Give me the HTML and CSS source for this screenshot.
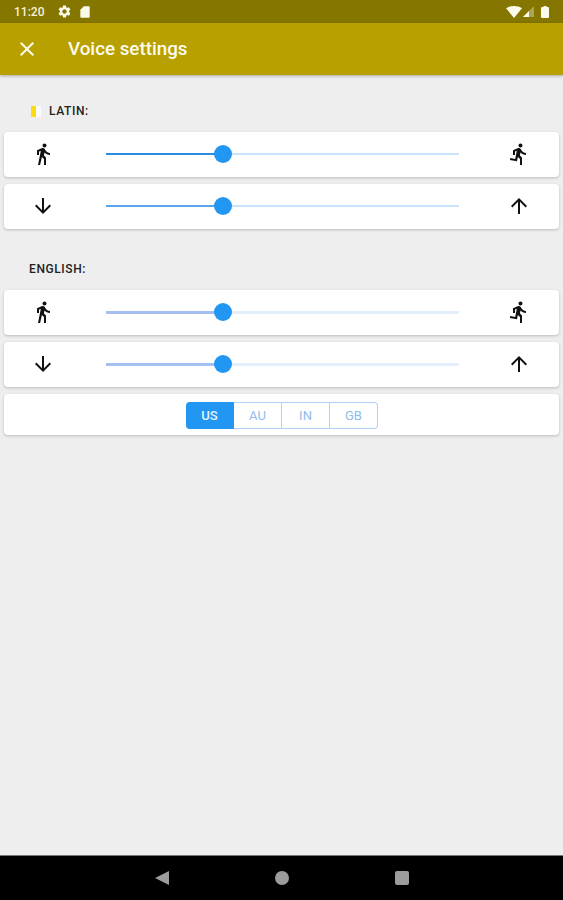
FILE: index.html
```html
<!DOCTYPE html>
<html lang="en">
<head>
  <meta charset="UTF-8" />
  <title>Voice settings</title>
  <link rel="stylesheet" href="styles.css">
</head>
<body>
  <svg class="defs" width="0" height="0">
    <symbol id="walk" viewBox="0 0 24 24"><path d="M13.5 5.5c1.1 0 2-.9 2-2s-.9-2-2-2-2 .9-2 2 .9 2 2 2zM9.8 8.9L7 23h2.1l1.8-8 2.1 2v6h2v-7.5l-2.1-2 .6-3C14.8 12 16.8 13 19 13v-2c-1.9 0-3.5-1-4.3-2.4l-1-1.6c-.4-.6-1-1-1.7-1-.3 0-.5.1-.8.1L6 8.3V13h2V9.6l1.8-.7"/></symbol>
    <symbol id="run" viewBox="0 0 24 24"><path d="M13.49 5.48c1.1 0 2-.9 2-2s-.9-2-2-2-2 .9-2 2 .9 2 2 2zm-3.6 13.9l1-4.4 2.1 2v6h2v-7.5l-2.1-2 .6-3c1.3 1.5 3.3 2.5 5.5 2.5v-2c-1.9 0-3.5-1-4.3-2.5l-1-1.6c-.4-.6-1-1-1.7-1-.3 0-.5.1-.8.1l-5.2 2.2v4.7h2v-3.4l1.8-.7-1.6 8.1-4.9-1-.4 2 7 1.4z"/></symbol>
    <symbol id="down" viewBox="0 0 24 24"><path d="M20 12l-1.41-1.41L13 16.17V4h-2v12.17l-5.58-5.59L4 12l8 8 8-8z"/></symbol>
    <symbol id="up" viewBox="0 0 24 24"><path d="M4 12l1.41 1.41L11 7.83V20h2V7.83l5.58 5.59L20 12l-8-8-8 8z"/></symbol>
  </svg>

  <div class="status-bar">
    <span class="clock">11:20</span>
    <svg class="st-gear" viewBox="0 0 24 24"><path d="M19.14 12.94c.04-.3.06-.61.06-.94 0-.32-.02-.64-.07-.94l2.03-1.58c.18-.14.23-.41.12-.61l-1.92-3.32c-.12-.22-.37-.29-.59-.22l-2.39.96c-.5-.38-1.03-.7-1.62-.94l-.36-2.54c-.04-.24-.24-.41-.48-.41h-3.84c-.24 0-.43.17-.47.41l-.36 2.54c-.59.24-1.13.57-1.62.94l-2.39-.96c-.22-.08-.47 0-.59.22L2.74 8.87c-.12.21-.08.47.12.61l2.03 1.58c-.05.3-.09.63-.09.94s.02.64.07.94l-2.03 1.58c-.18.14-.23.41-.12.61l1.92 3.32c.12.22.37.29.59.22l2.39-.96c.5.38 1.03.7 1.62.94l.36 2.54c.05.24.24.41.48.41h3.84c.24 0 .44-.17.47-.41l.36-2.54c.59-.24 1.13-.56 1.62-.94l2.39.96c.22.08.47 0 .59-.22l1.92-3.32c.12-.22.07-.47-.12-.61l-2.01-1.58zM12 15.6c-1.98 0-3.6-1.62-3.6-3.6s1.62-3.6 3.6-3.6 3.6 1.62 3.6 3.6-1.62 3.6-3.6 3.6z"/></svg>
    <svg class="st-sd" viewBox="0 0 24 24"><path d="M18 2h-8L4.02 8 4 20c0 1.1.9 2 2 2h12c1.1 0 2-.9 2-2V4c0-1.1-.9-2-2-2z"/></svg>
    <span class="spacer"></span>
    <svg class="st-wifi" viewBox="0 0 16 12"><path d="M0 2.2C2.2.8 5 0 8 0s5.800.8 8 2.200L8 12z"/></svg>
    <svg class="st-signal" viewBox="0 0 11 11"><path class="dim" d="M11 0v11H0z"/><path d="M6 5v6H0z"/></svg>
    <svg class="st-battery" viewBox="0 0 8 12"><path d="M2.500 0h3v1H7a1 1 0 0 1 1 1v9a1 1 0 0 1-1 1H1a1 1 0 0 1-1-1V2a1 1 0 0 1 1-1h1.500z"/></svg>
  </div>

  <header class="app-bar">
    <svg class="close" viewBox="0 0 24 24"><path d="M19 6.410L17.590 5 12 10.590 6.410 5 5 6.410 10.590 12 5 17.590 6.410 19 12 13.410 17.590 19 19 17.590 13.410 12z"/></svg>
    <h1>Voice settings</h1>
  </header>

  <main class="content">
    <div class="section-label flagged"><span class="flag"></span>LATIN:</div>
    <div class="card row">
      <svg class="icon"><use href="#walk"/></svg>
      <div class="slider"><div class="fill strong" style="width:33.100%"></div><span class="thumb"></span></div>
      <svg class="icon"><use href="#run"/></svg>
    </div>
    <div class="card row">
      <svg class="icon"><use href="#down"/></svg>
      <div class="slider"><div class="fill medium" style="width:33.100%"></div><span class="thumb"></span></div>
      <svg class="icon"><use href="#up"/></svg>
    </div>

    <div class="section-label second">ENGLISH:</div>
    <div class="card row">
      <svg class="icon"><use href="#walk"/></svg>
      <div class="slider pale"><div class="fill soft" style="width:33.100%"></div><span class="thumb"></span></div>
      <svg class="icon"><use href="#run"/></svg>
    </div>
    <div class="card row">
      <svg class="icon"><use href="#down"/></svg>
      <div class="slider pale"><div class="fill soft" style="width:33.100%"></div><span class="thumb"></span></div>
      <svg class="icon"><use href="#up"/></svg>
    </div>
    <div class="card accents">
      <div class="segments">
        <button class="active">US</button><button>AU</button><button>IN</button><button>GB</button>
      </div>
    </div>
  </main>

  <nav class="nav-bar">
    <span class="nav-cell"><svg width="16" height="16" viewBox="0 0 16 16"><path d="M15 1v14L1 8z"/></svg></span>
    <span class="nav-cell"><svg width="16" height="16" viewBox="0 0 16 16"><circle cx="8" cy="8" r="7"/></svg></span>
    <span class="nav-cell"><svg width="16" height="16" viewBox="0 0 16 16"><rect x="1" y="1" width="14" height="14" rx="2"/></svg></span>
  </nav>
</body>
</html>
```

FILE: styles.css
```css
* { box-sizing: border-box; }
html, body { height: 100%; }
body { margin: 0; height: 900px; display: flex; flex-direction: column; background: #eeeeee; color: #1a1a1a; font-family: Roboto, "Liberation Sans", sans-serif; overflow: hidden; }
.defs { position: absolute; }

.status-bar { height: 23px; flex: none; display: flex; align-items: center; padding: 0 14px; background: #857600; color: #f4f1dc; }
.status-bar svg { display: block; fill: #fbf9ea; }
.clock { font-size: 12px; font-weight: 500; width: 43px; }
.st-gear { width: 15px; height: 15px; }
.st-sd { width: 14px; height: 14px; margin-left: 6px; }
.spacer { flex: 1; }
.st-wifi { width: 16px; height: 12px; }
.st-signal { width: 11px; height: 11px; margin-left: 1px; }
.st-signal .dim { opacity: .35; }
.st-battery { width: 8px; height: 12px; margin-left: 7px; }

.app-bar { height: 52px; flex: none; display: flex; align-items: center; padding-left: 15px; background: #b8a000; color: #fdfbee; box-shadow: 0 1px 3px rgba(0,0,0,.3); position: relative; }
.close { width: 24px; height: 24px; fill: #fdfbee; }
.app-bar h1 { margin: 0 0 0 29px; font-size: 18.8px; font-weight: 500; }

.content { flex: 1; padding: 28px 4px 0; }
.section-label { height: 16px; line-height: 16px; margin: 0 0 13px 25px; font-size: 12px; font-weight: 500; letter-spacing: .6px; color: #222; display: flex; align-items: center; }
.section-label.second { margin-top: 32px; }
.flag { width: 10px; height: 11px; margin: 0 8px 0 2px; background: linear-gradient(to right, #fbdc12 50%, #fafafa 50%); }

.card { background: #fff; border-radius: 4px; box-shadow: 0 1px 3px rgba(0,0,0,.22); margin-bottom: 7px; }
.row { height: 45px; padding-bottom: 1px; display: grid; grid-template-columns: 78px 1fr 80px; align-items: center; justify-items: center; }
.icon { width: 24px; height: 24px; fill: #111; }

.slider { height: 2px; position: relative; background: #c8e3fb; justify-self: stretch; margin-left: 24px; width: calc(100% - 44px); }
.slider.pale { height: 3px; background: #e3f0fb; }
.fill { height: 100%; }
.fill.strong { background: #2a8be2; }
.fill.medium { background: #5aa5ea; }
.fill.soft { background: #a5bff0; }
.thumb { position: absolute; left: 33.100%; top: 50%; width: 18px; height: 18px; margin: -9px 0 0 -9px; border-radius: 50%; background: #2196f3; }

.accents { height: 41px; display: flex; align-items: center; justify-content: center; padding: 1px 0 0 1px; }
.segments { display: flex; height: 27px; }
.segments button { width: 48px; height: 27px; padding: 0; margin: 0; background: #fff; border: 1px solid #b3d0f6; border-left: 0; font: 400 13px Roboto, "Liberation Sans", sans-serif; color: #8fbcec; }
.segments button:last-child { border-radius: 0 4px 4px 0; }
.segments button.active { background: #2196f3; border-color: #2196f3; border-radius: 4px 0 0 4px; color: #e8f4fe; font-weight: 500; }

.nav-bar { height: 45px; flex: none; display: flex; justify-content: center; align-items: center; background: #000; border-top: 1px solid #777; }
.nav-cell { width: 120px; display: flex; justify-content: center; }
.nav-cell svg { fill: #9c9c9c; display: block; }
```
